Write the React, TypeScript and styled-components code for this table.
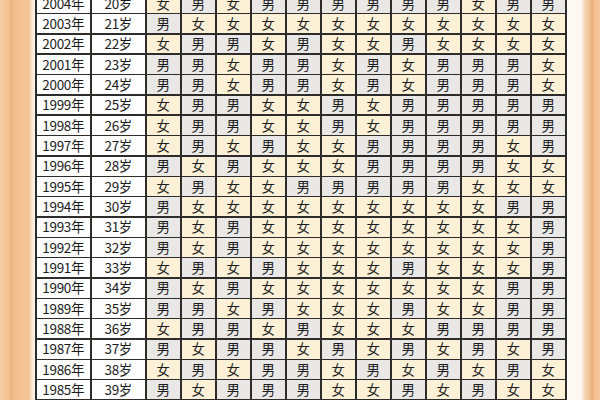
import React from "react";
import styled, { createGlobalStyle } from "styled-components";

type Sex = "男" | "女";

interface RowData {
  year: number;
  age: number;
  months: string;
}

// each string = 12 months, left to right
const rows: RowData[] = [
  { year: 2004, age: 20, months: "女男女男男男男男男女男男" },
  { year: 2003, age: 21, months: "男女女女女女女女女女女女" },
  { year: 2002, age: 22, months: "女男男女男女女男女女女女" },
  { year: 2001, age: 23, months: "男男女男男女男女男男男女" },
  { year: 2000, age: 24, months: "男男女男男女男女男男男女" },
  { year: 1999, age: 25, months: "女男男女女男女男男男男男" },
  { year: 1998, age: 26, months: "女男男女女男女男男男男男" },
  { year: 1997, age: 27, months: "女男女男女女男男男男女男" },
  { year: 1996, age: 28, months: "男女男女女女男男男男女女" },
  { year: 1995, age: 29, months: "女男女女男男男男男女女女" },
  { year: 1994, age: 30, months: "男女女女女女女女女女男男" },
  { year: 1993, age: 31, months: "男女男女女女女女女女女男" },
  { year: 1992, age: 32, months: "男女男女女女女女女女女男" },
  { year: 1991, age: 33, months: "女男女男女女女男女女女男" },
  { year: 1990, age: 34, months: "男女男女女女女女女女男男" },
  { year: 1989, age: 35, months: "男男女男女女女男女女男男" },
  { year: 1988, age: 36, months: "女男男女男女女女男男男男" },
  { year: 1987, age: 37, months: "男女男男女男女男女男女男" },
  { year: 1986, age: 38, months: "女男女男男女男女男女男女" },
  { year: 1985, age: 39, months: "男女男男男女女男女男女女" },
];

const GlobalStyle = createGlobalStyle`
  html, body {
    margin: 0;
    padding: 0;
    width: 600px;
    height: 400px;
    overflow: hidden;
    background: #fbf3ea;
  }
`;

const Page = styled.div`
  display: flex;
  width: 600px;
  height: 400px;
  overflow: hidden;
`;

const LeftEdge = styled.div`
  width: 35px;
  flex: none;
  background: linear-gradient(
    to right,
    #f7cfa8 0px,
    #f4c291 9px,
    #eeb27c 11px,
    #f3bf8e 14px,
    #f5c597 29px,
    #fbe6d2 32px,
    #fdf6ee 35px
  );
`;

const RightEdge = styled.div`
  flex: 1;
  background: linear-gradient(
    to right,
    #fefcf9 0px,
    #fdf7f0 14px,
    #f6d5b5 18px,
    #f3c496 22px,
    #eab07e 25px,
    #f2c092 28px,
    #f5c89c 35px
  );
`;

const Chart = styled.div`
  flex: none;
  align-self: flex-start;
  margin-top: -7.6px;
  display: grid;
  grid-template-columns: 53.5px 53.5px repeat(12, 33.5px);
  grid-auto-rows: 18.85px;
  gap: 1.5px;
  padding: 1.5px;
  background: #2e2c2a;
  font-family: "Noto Sans CJK SC", "Noto Sans", sans-serif;
  color: #1c1c1c;
`;

const InfoCell = styled.div`
  display: flex;
  align-items: center;
  justify-content: center;
  background: #fefefe;
  font-size: 13.5px;
  line-height: 1;
  letter-spacing: -0.3px;
`;

const SexCell = styled.div<{ $sex: Sex }>`
  display: flex;
  align-items: center;
  justify-content: center;
  background: ${(p) => (p.$sex === "男" ? "#e9e8e7" : "#fcf0d7")};
  font-size: 13.5px;
  line-height: 1;
`;

const App = () => {
  return (
    <Page>
      <GlobalStyle />
      <LeftEdge />
      <Chart>
        {rows.map((row) => (
          <React.Fragment key={row.year}>
            <InfoCell>{row.year}年</InfoCell>
            <InfoCell>{row.age}岁</InfoCell>
            {Array.from(row.months).map((s, i) => (
              <SexCell key={i} $sex={s as Sex}>
                {s}
              </SexCell>
            ))}
          </React.Fragment>
        ))}
      </Chart>
      <RightEdge />
    </Page>
  );
};

export default App;
